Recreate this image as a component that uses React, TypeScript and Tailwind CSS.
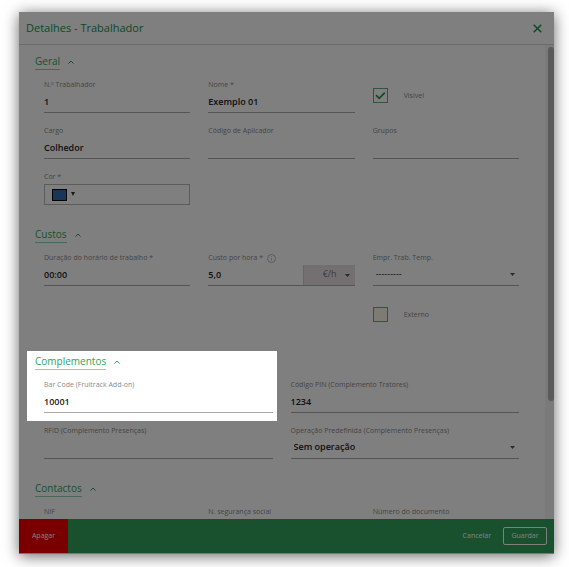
import React, { useId, useState } from "react";

const line = "w-full border-b border-[#aaaaaa]";
const valueText = "text-[9px] leading-[14px] font-semibold text-[#222222]";

function Caret() {
  return (
    <svg viewBox="0 0 5 3" className="pointer-events-none h-[3px] w-[5px] shrink-0 fill-[#555555]" aria-hidden="true">
      <path d="M0 0h5L2.500 3z" />
    </svg>
  );
}

function Label({ htmlFor, children }: { htmlFor: string; children: React.ReactNode }) {
  return (
    <label htmlFor={htmlFor} className="flex h-[14px] items-center gap-1 whitespace-nowrap text-[7px] leading-[14px] text-[#8a8a8a]">
      {children}
    </label>
  );
}

function TextField({ label, value = "" }: { label: string; value?: string }) {
  const id = useId();
  return (
    <div>
      <Label htmlFor={id}>{label}</Label>
      <input id={id} defaultValue={value} className={`block h-[21px] bg-transparent pb-0.5 outline-none ${line} ${valueText}`} />
    </div>
  );
}

function SelectField({ label, option, bold }: { label: string; option: string; bold?: boolean }) {
  const id = useId();
  return (
    <div>
      <Label htmlFor={id}>{label}</Label>
      <div className={`flex h-[21px] items-center pr-1 pb-0.5 ${line}`}>
        <select
          id={id}
          className={`min-w-0 flex-1 appearance-none bg-transparent pl-[3px] text-[9px] leading-[14px] text-[#222222] outline-none ${bold ? "font-semibold" : ""}`}
        >
          <option>{option}</option>
        </select>
        <Caret />
      </div>
    </div>
  );
}

function CheckField({ label, initial = false }: { label: string; initial?: boolean }) {
  const [on, setOn] = useState(initial);
  return (
    <label className="flex items-center gap-4 text-[7px] leading-[14px] text-[#8a8a8a]">
      <span className="grid size-[15px] shrink-0">
        <input
          type="checkbox"
          checked={on}
          onChange={(e) => setOn(e.target.checked)}
          className={`col-start-1 row-start-1 size-[15px] appearance-none border border-[#62ab7e] ${on ? "" : "bg-[#f8f8ea]"}`}
        />
        {on && (
          <svg viewBox="0 0 15 15" className="pointer-events-none col-start-1 row-start-1 size-[15px] fill-none stroke-[#219150] stroke-[1.7]" aria-hidden="true">
            <path d="M3 7.2l3.2 3.1 5.6-5.6" />
          </svg>
        )}
      </span>
      {label}
    </label>
  );
}

function Section({ title, children }: { title: string; children: React.ReactNode }) {
  return (
    <section>
      <h2 className="flex h-4 px-4 text-[10px] leading-[15px] text-[#2fa35b]">
        <button className="flex items-center gap-2">
          <span className="border-b border-[#8fd0a8]">{title}</span>
          <svg viewBox="0 0 6 4" className="h-1 w-1.5 fill-none stroke-[#2fa35b]" aria-hidden="true">
            <path d="M.4 3.6L3 1l2.6 2.6" />
          </svg>
        </button>
      </h2>
      <div className="mt-2 pr-[26px] pl-[25px]">{children}</div>
    </section>
  );
}

export default function App() {
  return (
    <main className="flex h-screen bg-white pt-3 pr-[15px] pb-[13px] pl-[19px] font-['Open_Sans','Noto_Sans',sans-serif]">
      <div
        role="dialog"
        aria-labelledby="dialog-title"
        className="relative flex min-w-0 flex-1 flex-col overflow-hidden bg-white shadow-[0_2px_14px_rgba(0,0,0,0.6)]"
      >
        <header className="flex h-[33px] shrink-0 items-center justify-between border-b border-[#d6d6d6] pr-3 pl-[7px]">
          <h1 id="dialog-title" className="text-[11px] leading-4 text-[#219150]">
            Detalhes - Trabalhador
          </h1>
          <button aria-label="Fechar">
            <svg viewBox="0 0 9 9" className="size-[9px] stroke-[#219150] stroke-[1.5]" aria-hidden="true">
              <path d="M.7.7l7.6 7.6M8.3.7L.7 8.3" />
            </svg>
          </button>
        </header>

        <div className="flex min-h-0 flex-1">
          <div className="flex min-w-0 flex-1 flex-col gap-[22px] overflow-hidden pt-[9px]">
            <Section title="Geral">
              <div className="grid grid-cols-3 gap-x-[18px] gap-y-[11px]">
                <TextField label="N.º Trabalhador" value="1" />
                <TextField label="Nome *" value="Exemplo 01" />
                <CheckField label="Visível" initial />
                <TextField label="Cargo" value="Colhedor" />
                <TextField label="Código de Aplicador" />
                <TextField label="Grupos" />
                <div>
                  <Label htmlFor="cor">Cor *</Label>
                  <button id="cor" className="flex h-[21px] w-full items-center gap-1 border border-[#b8b8b8] px-[7px]">
                    <span className="h-3 w-[15px] border border-black bg-[#2f6cb0]" />
                    <svg viewBox="0 0 4 4" className="mb-0.5 size-1 fill-[#333333]" aria-hidden="true">
                      <path d="M0 0h4L2 4z" />
                    </svg>
                  </button>
                </div>
              </div>
            </Section>

            <Section title="Custos">
              <div className="grid grid-cols-3 gap-x-[18px] gap-y-[21px] pb-[10px]">
                <TextField label="Duração do horário de trabalho *" value="00:00" />
                <div>
                  <Label htmlFor="custo">
                    Custo por hora *
                    <svg viewBox="0 0 9 9" className="size-[9px] fill-none stroke-[#a8a8a8] stroke-[0.8]" aria-hidden="true">
                      <circle cx="4.500" cy="4.500" r="4" />
                      <path d="M4.500 4v2.600M4.500 2.300v.8" />
                    </svg>
                  </Label>
                  <div className={`flex h-[21px] ${line}`}>
                    <input id="custo" defaultValue="5,0" className={`min-w-0 flex-1 bg-transparent outline-none ${valueText}`} />
                    <div className="flex w-[52px] items-center border-l border-[#cccccc] bg-[#e9e1e3] pr-[5px]">
                      <select aria-label="Unidade" className="min-w-0 flex-1 appearance-none pb-0.5 pl-[19px] text-[9px] leading-[14px] text-[#777777] outline-none">
                        <option>€/h</option>
                      </select>
                      <Caret />
                    </div>
                  </div>
                </div>
                <SelectField label="Empr. Trab. Temp." option="---------" />
                <div className="col-start-3">
                  <CheckField label="Externo" />
                </div>
              </div>
            </Section>

            <Section title="Complementos">
              <div className="grid grid-cols-2 gap-x-[18px] gap-y-[11px]">
                <TextField label="Bar Code (Fruitrack Add-on)" value="10001" />
                <TextField label="Código PIN (Complemento Tratores)" value="1234" />
                <TextField label="RFID (Complemento Presenças)" />
                <SelectField label="Operação Predefinida (Complemento Presenças)" option="Sem operação" bold />
              </div>
            </Section>

            <Section title="Contactos">
              <div className="grid grid-cols-3 gap-x-[18px] gap-y-[11px]">
                <TextField label="NIF" />
                <TextField label="N. segurança social" />
                <TextField label="Número do documento" />
              </div>
            </Section>
          </div>
          <div className="w-[9px] shrink-0 bg-[#f4f4f4] pt-0.5 pl-[3px]" aria-hidden="true">
            <div className="h-3/4 w-[6px] rounded-full bg-[#b4b4b4]" />
          </div>
        </div>

        <footer className="flex h-[35px] shrink-0 items-stretch border-b border-[#dff5e7] bg-[#33a25e] text-[7px] leading-[14px] text-white">
          <button className="w-[49px] bg-[#f40000]">Apagar</button>
          <div className="ml-auto flex items-center gap-3 pr-[7px]">
            <button>Cancelar</button>
            <button className="h-[18px] w-11 rounded-[2px] border border-white">Guardar</button>
          </div>
        </footer>

        {/* Tour spotlight: dims everything except the bar code field */}
        <div className="pointer-events-none absolute top-[339px] left-2 h-[70px] w-[250px] shadow-[0_0_0_2000px_rgba(0,0,0,0.5)]" />
      </div>
    </main>
  );
}
